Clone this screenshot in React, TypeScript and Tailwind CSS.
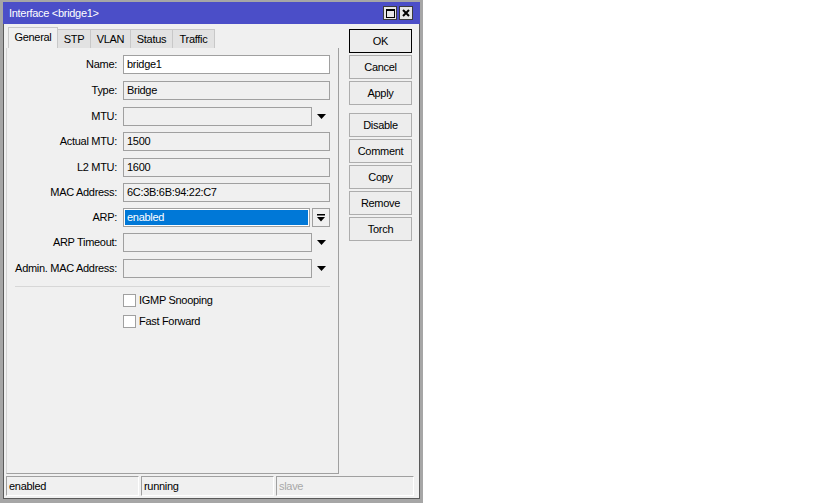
import React from "react";

const Arrow = () => (
    <svg width="9" height="5" viewBox="0 0 9 5" className="block">
        <polygon points="0,0 9,0 4.5,5" fill="#000" />
    </svg>
);

const Field = ({
    label,
    value,
    white,
    dropdown,
    className = "",
}: {
    label: string;
    value?: string;
    white?: boolean;
    dropdown?: boolean;
    className?: string;
}) => (
    <div className={`flex items-center h-[19px] ${className}`}>
        <div className="w-[110px] text-right whitespace-nowrap">{label}</div>
        <div
            className={`ml-[6px] h-[19px] border border-[#a0a0a0] flex items-center pl-[3px] ${
                dropdown ? "w-[189px]" : "w-[207px]"
            } ${white ? "bg-white" : "bg-[#f0f0f0]"}`}
        >
            {value}
        </div>
        {dropdown && (
            <div className="w-[18px] h-[19px] flex items-center justify-center">
                <Arrow />
            </div>
        )}
    </div>
);

const Btn = ({ label, primary, className = "" }: { label: string; primary?: boolean; className?: string }) => (
    <div
        className={`h-[24px] flex items-center justify-center bg-[#ededed] border ${
            primary ? "border-black" : "border-[#adadad]"
        } ${className}`}
    >
        {label}
    </div>
);

const Check = ({ label, className = "" }: { label: string; className?: string }) => (
    <div className={`flex items-center h-[13px] pl-[116px] ${className}`}>
        <div className="w-[13px] h-[13px] bg-white border border-[#a0a0a0]" />
        <span className="ml-[3px]">{label}</span>
    </div>
);

const tabs = [
    { name: "STP", w: "w-[33px]" },
    { name: "VLAN", w: "w-[40px]" },
    { name: "Status", w: "w-[42px]" },
    { name: "Traffic", w: "w-[42px]" },
];

export default function App() {
    return (
        <div className="w-[819px] h-[503px] bg-white font-['Liberation_Sans',Arial,sans-serif] text-[11px] tracking-[-0.3px] text-black leading-none">
            <div className="w-[423px] h-full bg-[#a6a6a6] pt-[2px] px-[3px] pb-[4px] flex flex-col">
                {/* Title bar */}
                <div className="h-[22px] bg-[#4b4ec8] flex items-center pl-[6px] pr-[7px] text-white">
                    <span className="flex-1 pt-[1px]">Interface &lt;bridge1&gt;</span>
                    <div className="flex gap-[2px]">
                        <div className="w-[14px] h-[14px] bg-[#e6e6e6] border border-[#3c3c3c] flex items-center justify-center">
                            <svg width="9" height="9" viewBox="0 0 9 9">
                                <rect x="0.5" y="0.5" width="8" height="8" fill="none" stroke="#000" strokeWidth="1" />
                                <rect x="0" y="0" width="9" height="2" fill="#000" />
                            </svg>
                        </div>
                        <div className="w-[14px] h-[14px] bg-[#e6e6e6] border border-[#3c3c3c] flex items-center justify-center">
                            <svg width="8" height="8" viewBox="0 0 8 8">
                                <path d="M1 1 L7 7 M7 1 L1 7" stroke="#000" strokeWidth="2" />
                            </svg>
                        </div>
                    </div>
                </div>

                {/* Body */}
                <div className="flex-1 bg-[#f0f0f0] border-x border-b border-[#5a5a5a] flex flex-col">
                    <div className="h-[450px] flex">
                        {/* Left panel */}
                        <div className="ml-[2px] w-[333px] flex flex-col pt-[3px]">
                            <div className="h-[21px] flex items-end pl-[2px]">
                                <div className="w-[50px] h-[21px] bg-[#f0f0f0] border-l border-t border-r border-[#c8c8c8] flex items-center justify-center pb-[1px]">
                                    General
                                </div>
                                {tabs.map((t) => (
                                    <div
                                        key={t.name}
                                        className={`${t.w} h-[19px] bg-[#e2e2e2] border-t border-r border-[#c8c8c8] flex items-center justify-center`}
                                    >
                                        {t.name}
                                    </div>
                                ))}
                            </div>
                            <div className="flex-1 border-l border-l-[#d4d4d4] border-r border-b border-[#a0a0a0] pt-[7px] flex flex-col">
                                <Field label="Name:" value="bridge1" white />
                                <Field label="Type:" value="Bridge" className="mt-[7px]" />
                                <Field label="MTU:" dropdown className="mt-[7px]" />
                                <Field label="Actual MTU:" value="1500" className="mt-[6px]" />
                                <Field label="L2 MTU:" value="1600" className="mt-[7px]" />
                                <Field label="MAC Address:" value="6C:3B:6B:94:22:C7" className="mt-[6px]" />
                                <div className="flex items-center h-[19px] mt-[6px]">
                                    <div className="w-[110px] text-right">ARP:</div>
                                    <div className="ml-[6px] w-[187px] h-[19px] border border-[#a0a0a0] bg-white p-px">
                                        <div className="h-full bg-[#0078d7] text-white flex items-center pl-[2px]">enabled</div>
                                    </div>
                                    <div className="ml-[2px] w-[18px] h-[19px] border border-[#a0a0a0] bg-[#f0f0f0] flex items-center justify-center">
                                        <svg width="8" height="8" viewBox="0 0 8 8">
                                            <rect x="0" y="0" width="8" height="1.5" fill="#000" />
                                            <polygon points="0,3 8,3 4,7.5" fill="#000" />
                                        </svg>
                                    </div>
                                </div>
                                <Field label="ARP Timeout:" dropdown className="mt-[6px]" />
                                <Field label="Admin. MAC Address:" dropdown className="mt-[7px]" />
                                <div className="mt-[8px] ml-[8px] w-[315px] h-px bg-[#d7d7d7]" />
                                <Check label="IGMP Snooping" className="mt-[7px]" />
                                <Check label="Fast Forward" className="mt-[8px]" />
                            </div>
                        </div>

                        {/* Buttons */}
                        <div className="ml-[10px] w-[63px] pt-[5px] flex flex-col gap-[2px]">
                            <Btn label="OK" primary />
                            <Btn label="Cancel" />
                            <Btn label="Apply" />
                            <Btn label="Disable" className="mt-[6px]" />
                            <Btn label="Comment" />
                            <Btn label="Copy" />
                            <Btn label="Remove" />
                            <Btn label="Torch" />
                        </div>
                    </div>

                    {/* Status bar */}
                    <div className="mt-[2px] h-[20px] pl-[2px] flex gap-[2px]">
                        <div className="w-[133px] border-t border-l border-[#a0a0a0] border-b border-r border-b-white border-r-white flex items-center pl-[2px]">
                            enabled
                        </div>
                        <div className="w-[133px] border-t border-l border-[#a0a0a0] border-b border-r border-b-white border-r-white flex items-center pl-[2px]">
                            running
                        </div>
                        <div className="w-[138px] border-t border-l border-[#a0a0a0] border-b border-r border-b-white border-r-white flex items-center pl-[2px] text-[#a8a8a8]">
                            slave
                        </div>
                    </div>
                </div>
            </div>
        </div>
    );
}
